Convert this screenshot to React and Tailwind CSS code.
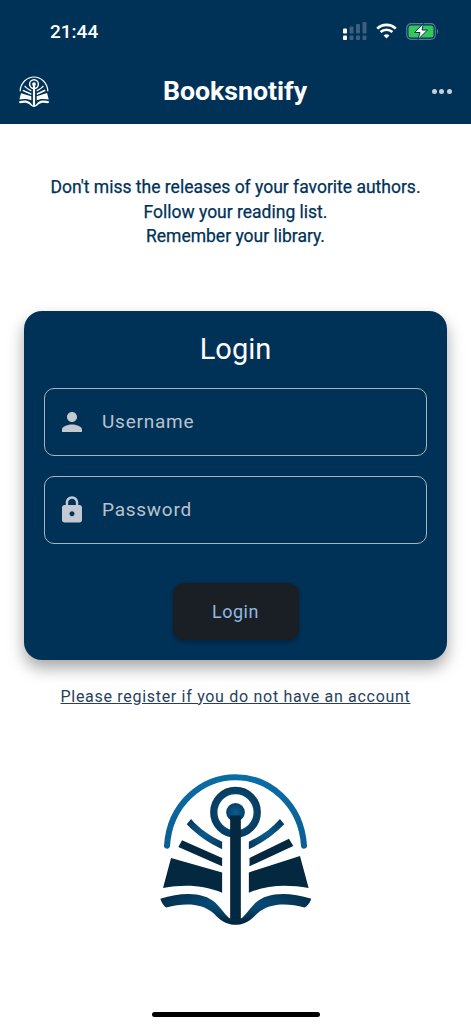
import { MdLock, MdPerson } from "react-icons/md";

function BookLogo({ className, arch, ring, body, pages }) {
  return (
    <svg viewBox="50 35 470 460" className={className}>
      <defs>
        <linearGradient id="logoArch" x1="0" y1="0" x2="0" y2="1">
          <stop offset="0" stopColor="#0a6ca6" />
          <stop offset="1" stopColor="#0b5f92" />
        </linearGradient>
        <radialGradient id="logoRing" cx="0.5" cy="0.5" r="0.6">
          <stop offset="0" stopColor="#0b5c8e" />
          <stop offset="1" stopColor="#063a5e" />
        </radialGradient>
        <radialGradient id="logoBase" cx="0.5" cy="0.3" r="0.6">
          <stop offset="0" stopColor="#08568a" />
          <stop offset="1" stopColor="#03283f" />
        </radialGradient>
      </defs>
      <path d="M80 255 C88 130 185 50 285 50 C385 50 482 130 490 255" fill="none" stroke={arch} strokeWidth="18" strokeLinecap="round" />
      <circle cx="285" cy="155" r="65" fill="none" stroke={ring} strokeWidth="22" />
      <circle cx="285" cy="155" r="28" fill={ring} />
      <path d="M269 165 H301 V490 H269 Z" fill={body} />
      <path d="M152 175 L139 191 C170 223 205 247 245 266 V243 C210 227 178 205 152 175 Z" fill={ring} />
      <path d="M418 175 L431 191 C400 223 365 247 325 266 V243 C360 227 392 205 418 175 Z" fill={ring} />
      <path d="M125 239 L114 259 L245 317 V292 Z" fill={body} />
      <path d="M445 234 L458 256 L327 317 V292 Z" fill={body} />
      <path d="M92 292 L245 335 V396 C190 372 130 370 68 382 Z" fill={body} />
      <path d="M478 286 L325 335 V396 C380 372 440 370 504 382 Z" fill={body} />
      <path d="M60 414 C125 393 190 393 225 426 C240 440 250 458 264 470 C272 476 298 476 306 470 C320 458 330 440 345 426 C380 393 445 393 512 414 C507 428 500 436 492 440 C440 426 385 426 350 458 C335 474 315 492 285 492 C255 492 235 474 220 458 C185 426 130 426 78 440 C70 436 65 428 60 414 Z" fill={pages} />
    </svg>
  );
}

function SignalIcon() {
  return (
    <svg width="24" height="18" viewBox="0 0 24 18">
      <rect x="0" y="6.5" width="4" height="5" rx="1" fill="#fff" />
      <rect x="0" y="13.5" width="4" height="4.5" rx="1" fill="#fff" />
      <rect x="6.5" y="4.5" width="4" height="7" rx="1" fill="#3d5f7d" />
      <rect x="6.5" y="13.5" width="4" height="4.5" rx="1" fill="#3d5f7d" />
      <rect x="13" y="2" width="4" height="9.5" rx="1" fill="#3d5f7d" />
      <rect x="13" y="13.5" width="4" height="4.5" rx="1" fill="#3d5f7d" />
      <rect x="19.5" y="0" width="4" height="11.5" rx="1" fill="#3d5f7d" />
      <rect x="19.5" y="13.5" width="4" height="4.5" rx="1" fill="#3d5f7d" />
    </svg>
  );
}

function WifiIcon() {
  return (
    <svg width="21" height="16" viewBox="0 0 21 16" fill="none" stroke="#fff" strokeWidth="2.6">
      <path d="M1.2 5.6 C6.5 .6 14.5 .6 19.8 5.6" />
      <path d="M4.6 9 C8 6 13 6 16.4 9" />
      <path d="M10.5 15.5 L7.6 12.4 C9.3 11 11.7 11 13.4 12.4 Z" fill="#fff" stroke="none" />
    </svg>
  );
}

function BatteryIcon() {
  return (
    <svg width="33" height="17" viewBox="0 0 33 17">
      <rect x="0.7" y="0.7" width="28.6" height="15.6" rx="4.5" fill="none" stroke="#5b7a93" strokeWidth="1.2" />
      <rect x="2.5" y="2.5" width="25" height="12" rx="2.5" fill="#34c759" />
      <path d="M31 6 C32.4 6.5 32.4 10.5 31 11 Z" fill="#5b7a93" />
      <path d="M17.5 0.5 L8.5 9.5 H14 L12 16.5 L21.5 7 H16 Z" fill="#fff" stroke="#003258" strokeWidth="1" />
    </svg>
  );
}

function Field({ icon, label }) {
  return (
    <div className="flex h-[68px] items-center rounded-[10px] border-[1.5px] border-[#aab4c0] pl-[12px]">
      {icon}
      <span className="ml-[15px] pt-[2px] text-[19px] tracking-[0.75px] text-[#bac2cd]">{label}</span>
    </div>
  );
}

export default function App() {
  return (
    <div className="flex min-h-[1024px] flex-col items-center bg-white font-['Roboto',sans-serif]">
      <header className="w-full bg-[#003258]">
        <div className="flex h-[62px] items-center justify-between pl-[50px] pr-[32px]">
          <span className="text-[19px] font-medium leading-none text-white">21:44</span>
          <div className="flex items-center">
            <SignalIcon />
            <span className="ml-[9px]"><WifiIcon /></span>
            <span className="ml-[9px]"><BatteryIcon /></span>
          </div>
        </div>
        <div className="flex h-[62px] items-center justify-between pb-[3px] pl-[18px] pr-[19px]">
          <BookLogo className="h-[31px] w-[32px]" arch="#fff" ring="#fff" body="#fff" pages="#fff" />
          <span className="text-[26.7px] font-bold text-white">Booksnotify</span>
          <div className="flex w-[32px] justify-end gap-[2.5px]">
            <span className="size-[5px] rounded-full bg-[#c6ced7]" />
            <span className="size-[5px] rounded-full bg-[#c6ced7]" />
            <span className="size-[5px] rounded-full bg-[#c6ced7]" />
          </div>
        </div>
      </header>

      <div className="mt-[51px] text-center text-[17.5px] leading-[24.5px] text-[#003258] [-webkit-text-stroke:0.25px_#003258]">
        <p>Don't miss the releases of your favorite authors.</p>
        <p>Follow your reading list.</p>
        <p>Remember your library.</p>
      </div>

      <section className="mt-[62px] flex h-[349px] w-[423px] flex-col rounded-[18px] bg-[#003258] px-[20px] shadow-[0_8px_16px_rgba(0,0,0,0.35)]">
        <h1 className="mt-[19px] text-center text-[29px] leading-[38px] text-white">Login</h1>
        <div className="mt-[20px] flex flex-col gap-[20px]">
          <Field icon={<MdPerson size={30} color="#c3c9d2" />} label="Username" />
          <Field icon={<MdLock size={30} color="#c3c9d2" />} label="Password" />
        </div>
        <button className="mx-auto mt-[39px] h-[57px] w-[126px] rounded-[10px] bg-[#1a1f26] text-[18px] tracking-[0.5px] text-[#93b8e2] shadow-[0_2px_5px_rgba(0,0,0,0.3)]">
          Login
        </button>
      </section>

      <a className="mt-[27px] text-[16px] leading-[20px] tracking-[0.7px] text-[#27405f] underline">
        Please register if you do not have an account
      </a>

      <BookLogo
        className="mt-[65px] h-[154px] w-[157px]"
        arch="url(#logoArch)"
        ring="url(#logoRing)"
        body="#03283f"
        pages="url(#logoBase)"
      />

      <div className="mt-[86px] h-[5px] w-[168px] rounded-full bg-black" />
    </div>
  );
}
